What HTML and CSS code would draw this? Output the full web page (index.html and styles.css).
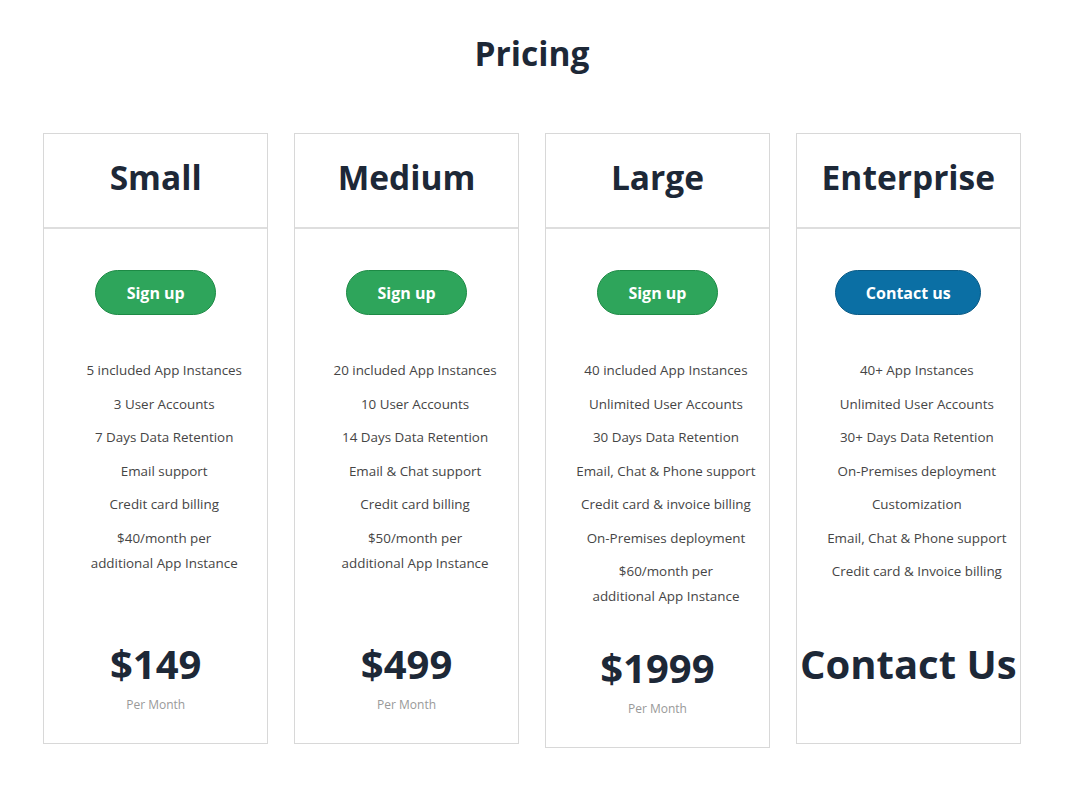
FILE: index.html
```html
<!DOCTYPE html>
<html lang="en">
<head>
<meta charset="utf-8">
<title>Pricing</title>
<link rel="stylesheet" href="styles.css">
</head>
<body>
<main class="page">
  <h1 class="page-title">Pricing</h1>
  <div class="plans">
    <section class="plan">
      <header class="plan-head"><h2>Small</h2></header>
      <div class="plan-body">
        <a class="btn btn-green" href="#">Sign up</a>
        <ul class="features">
          <li>5 included App Instances</li>
          <li>3 User Accounts</li>
          <li>7 Days Data Retention</li>
          <li>Email support</li>
          <li>Credit card billing</li>
          <li>$40/month per<br>additional App Instance</li>
        </ul>
        <div class="price">$149</div>
        <div class="per">Per Month</div>
      </div>
    </section>
    <section class="plan">
      <header class="plan-head"><h2>Medium</h2></header>
      <div class="plan-body">
        <a class="btn btn-green" href="#">Sign up</a>
        <ul class="features">
          <li>20 included App Instances</li>
          <li>10 User Accounts</li>
          <li>14 Days Data Retention</li>
          <li>Email &amp; Chat support</li>
          <li>Credit card billing</li>
          <li>$50/month per<br>additional App Instance</li>
        </ul>
        <div class="price">$499</div>
        <div class="per">Per Month</div>
      </div>
    </section>
    <section class="plan">
      <header class="plan-head"><h2>Large</h2></header>
      <div class="plan-body">
        <a class="btn btn-green" href="#">Sign up</a>
        <ul class="features">
          <li>40 included App Instances</li>
          <li>Unlimited User Accounts</li>
          <li>30 Days Data Retention</li>
          <li>Email, Chat &amp; Phone support</li>
          <li>Credit card &amp; invoice billing</li>
          <li>On-Premises deployment</li>
          <li>$60/month per<br>additional App Instance</li>
        </ul>
        <div class="price">$1999</div>
        <div class="per">Per Month</div>
      </div>
    </section>
    <section class="plan">
      <header class="plan-head"><h2>Enterprise</h2></header>
      <div class="plan-body">
        <a class="btn btn-blue" href="#">Contact us</a>
        <ul class="features">
          <li>40+ App Instances</li>
          <li>Unlimited User Accounts</li>
          <li>30+ Days Data Retention</li>
          <li>On-Premises deployment</li>
          <li>Customization</li>
          <li>Email, Chat &amp; Phone support</li>
          <li>Credit card &amp; Invoice billing</li>
        </ul>
        <div class="price price-wide">Contact Us</div>
      </div>
    </section>
  </div>
</main>
</body>
</html>
```

FILE: styles.css
```css
* { box-sizing: border-box; }

html, body {
  margin: 0;
  padding: 0;
  background: #ffffff;
}

body {
  font-family: "Open Sans", "Noto Sans", "Liberation Sans", sans-serif;
  color: #1d2837;
}

.page {
  width: 978px;
  margin: 0 0 0 43px;
  padding-top: 31px;
}

.page-title {
  margin: 0;
  font-size: 33.5px;
  line-height: 44px;
  font-weight: 700;
  text-align: center;
  color: #1d2837;
}

.plans {
  margin-top: 58px;
  display: grid;
  grid-template-columns: repeat(4, 1fr);
  column-gap: 25.5px;
  align-items: start;
}

.plan {
  border: 1px solid #d8d8d8;
  background: #fff;
}

.plan-head {
  height: 95px;
  border-bottom: 2px solid #dedede;
  display: flex;
  align-items: center;
  justify-content: center;
  padding-bottom: 8px;
}

.plan-head h2 {
  margin: 0;
  font-size: 33.5px;
  line-height: 44px;
  font-weight: 700;
  color: #1d2837;
}

.plan-body {
  display: flex;
  flex-direction: column;
  align-items: center;
  padding: 41px 0 29px;
}

.btn {
  display: inline-flex;
  align-items: center;
  justify-content: center;
  height: 45px;
  border-radius: 23px;
  font-size: 16px;
  font-weight: 700;
  color: #fff;
  text-decoration: none;
}

.btn-green {
  width: 121px;
  background: #2ea55b;
  border: 1px solid #1d8a45;
}

.btn-blue {
  width: 146px;
  background: #0b6fa4;
  border: 1px solid #0a5a85;
}

.features {
  list-style: none;
  margin: 43px 0 0;
  padding: 0 0 0 17px;
  min-height: 256px;
  width: 100%;
  text-align: center;
  font-size: 13.4px;
  line-height: 25px;
  color: #454545;
}

.features li {
  margin-bottom: 8.5px;
}

.price {
  margin-top: 26px;
  font-size: 40px;
  line-height: 48px;
  font-weight: 700;
  color: #1d2837;
  white-space: nowrap;
}

.per {
  margin-top: 8px;
  font-size: 12px;
  line-height: 18px;
  color: #999;
}

.price-wide {
  margin-bottom: 26px;
}
```
